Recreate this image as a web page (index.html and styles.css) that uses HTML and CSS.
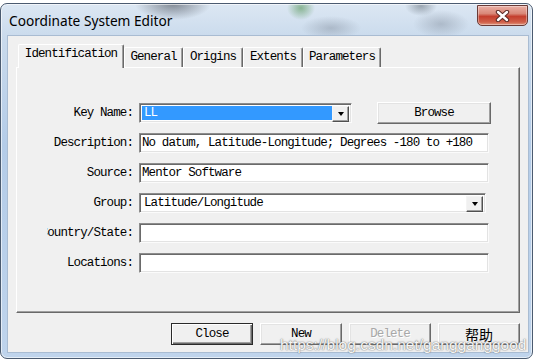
FILE: index.html
```html
<!DOCTYPE html>
<html lang="en">
<head>
    <meta charset="UTF-8">
    <title>Coordinate System Editor</title>
    <link rel="stylesheet" href="styles.css">
</head>
<body>

    <div class="window">
        <!-- Заголовок окна -->
        <div class="titlebar">
            <span class="title">Coordinate System Editor</span>
            <button class="close-btn" aria-label="Close">
                <svg width="15" height="12" viewBox="0 0 15 12">
                    <path d="M3 2 L12 10 M12 2 L3 10" stroke="#5a2a26" stroke-width="4.4" stroke-linecap="round"/>
                    <path d="M3 2 L12 10 M12 2 L3 10" stroke="#ffffff" stroke-width="2.4" stroke-linecap="round"/>
                </svg>
            </button>
        </div>

        <div class="client">
            <div class="tabs">
                <div class="tab active tab-ident">Identification</div>
                <div class="tab tab-general">General</div>
                <div class="tab tab-origins">Origins</div>
                <div class="tab tab-extents">Extents</div>
                <div class="tab tab-params">Parameters</div>
            </div>

            <div class="panel">
                <div class="row row-first">
                    <label class="field-label"><span>Key Name:</span></label>
                    <div class="combo combo-key">
                        <span class="combo-value">LL</span>
                        <span class="drop-btn"><i class="arrow"></i></span>
                    </div>
                    <button class="btn btn-browse">Browse</button>
                </div>
                <div class="row">
                    <label class="field-label"><span>Description:</span></label>
                    <div class="input">No datum, Latitude-Longitude; Degrees -180 to +180</div>
                </div>
                <div class="row">
                    <label class="field-label"><span>Source:</span></label>
                    <div class="input">Mentor Software</div>
                </div>
                <div class="row">
                    <label class="field-label"><span>Group:</span></label>
                    <div class="combo combo-group">
                        <span class="combo-value">Latitude/Longitude</span>
                        <span class="drop-btn"><i class="arrow"></i></span>
                    </div>
                </div>
                <div class="row">
                    <label class="field-label"><span>Country/State:</span></label>
                    <div class="input"></div>
                </div>
                <div class="row">
                    <label class="field-label"><span>Locations:</span></label>
                    <div class="input"></div>
                </div>
            </div>

            <div class="actions">
                <button class="btn btn-default">Close</button>
                <button class="btn">New</button>
                <button class="btn btn-disabled">Delete</button>
                <button class="btn btn-cjk">帮助</button>
            </div>
        </div>

        <div class="watermark">https://blog.csdn.net/gangganggood</div>
    </div>

</body>
</html>
```

FILE: styles.css
```css
body {
    margin: 0;
    width: 539px;
    height: 363px;
    overflow: hidden;
    background-color: #ffffff;
    font-family: "Liberation Mono", "DejaVu Sans Mono", monospace;
    font-size: 12.5px;
    letter-spacing: -0.9px;
    color: #000000;
}

/* Рамка окна (Aero) */
.window {
    position: relative;
    box-sizing: border-box;
    width: 533px;
    height: 356px;
    margin-top: 3px;
    padding: 0 4px 6px 7px;
    border: 1px solid #4b5b70;
    border-radius: 7px;
    background:
        radial-gradient(ellipse 38px 16px at 172px 0px, rgba(55, 60, 70, 0.55), transparent),
        radial-gradient(ellipse 14px 12px at 300px 4px, rgba(70, 140, 70, 0.55), transparent),
        radial-gradient(ellipse 30px 12px at 330px 24px, rgba(90, 100, 115, 0.3), transparent),
        radial-gradient(ellipse 28px 14px at 440px 20px, rgba(90, 100, 115, 0.3), transparent),
        radial-gradient(ellipse 16px 10px at 420px 2px, rgba(60, 70, 80, 0.4), transparent),
        linear-gradient(to bottom, #dce7f3 0%, #c9daec 10%, #b4cce8 40%, #bfd4ec 100%);
    box-shadow: inset 0 0 0 1px rgba(255, 255, 255, 0.6);
}

.titlebar {
    display: flex;
    justify-content: space-between;
    align-items: flex-start;
    height: 32px;
}

.title {
    margin-top: 8px;
    padding-left: 1px;
    font-family: "Noto Sans", "Open Sans", sans-serif;
    font-size: 13.7px;
    line-height: 18px;
    letter-spacing: 0;
    color: #000000;
}

.close-btn {
    display: flex;
    align-items: center;
    justify-content: center;
    box-sizing: border-box;
    width: 51px;
    height: 21px;
    margin-top: 1px;
    padding: 0;
    border: 1px solid #6a3a36;
    border-radius: 0 0 5px 5px;
    background: linear-gradient(to bottom, #eab0a6 0%, #d98878 40%, #c43f2e 55%, #d0604a 85%, #e19a82 100%);
    box-shadow: inset 0 0 0 1px rgba(255, 255, 255, 0.35);
}

/* Клиентская область */
.client {
    box-sizing: border-box;
    height: 316px;
    padding: 8px 8px 0 8px;
    background-color: #f0f0f0;
    box-shadow: 0 0 0 1px #a9bcd2;
}

.tabs {
    position: relative;
    z-index: 1;
    display: flex;
    align-items: flex-end;
    height: 23px;
    padding-left: 2px;
}

.tab {
    box-sizing: border-box;
    height: 20px;
    line-height: 18px;
    text-align: center;
    background-color: #f0f0f0;
    border-top: 1px solid #ffffff;
    border-left: 1px solid #ffffff;
    border-right: 1px solid #696969;
    border-radius: 2px 2px 0 0;
    box-shadow: inset -1px 0 #a0a0a0;
}

.tab.active {
    height: 24px;
    margin-bottom: -1px;
    line-height: 19px;
}

.tab-ident { width: 106px; }
.tab-general { width: 59px; }
.tab-origins { width: 60px; }
.tab-extents { width: 60px; }
.tab-params { width: 78px; }

.panel {
    box-sizing: border-box;
    height: 246px;
    padding: 34px 0 0 30px;
    border: 1px solid;
    border-color: #ffffff #696969 #696969 #ffffff;
    box-shadow: inset -1px -1px #a0a0a0;
    display: flex;
    flex-direction: column;
    gap: 10px;
}

.row {
    display: flex;
    align-items: center;
    height: 20px;
}

.row-first {
    height: 22px;
    margin-bottom: -1px;
}

.field-label {
    display: flex;
    justify-content: flex-end;
    width: 86px;
    margin-right: 6px;
    overflow: hidden;
    white-space: nowrap;
}

.field-label span {
    flex-shrink: 0;
}

/* Утопленные поля ввода */
.input,
.combo {
    box-sizing: border-box;
    height: 20px;
    background-color: #ffffff;
    border: 1px solid;
    border-color: #8c8c8c #fbfbfb #fbfbfb #8c8c8c;
    box-shadow: inset 1px 1px #6a6a6a, inset -1px -1px #e3e3e3;
}

.input {
    width: 350px;
    padding: 0 0 0 2px;
    line-height: 18px;
    white-space: nowrap;
    overflow: hidden;
}

.combo {
    display: flex;
    padding: 2px;
}

.combo-key { width: 213px; }
.combo-group { width: 347px; }

.combo-value {
    flex: 1;
    padding-left: 2px;
    line-height: 15px;
    white-space: nowrap;
}

.combo-key .combo-value {
    background-color: #3399ff;
    color: #ffffff;
}

.drop-btn {
    display: flex;
    align-items: center;
    justify-content: center;
    box-sizing: border-box;
    width: 17px;
    height: 16px;
    background-color: #f0f0f0;
    border: 1px solid;
    border-color: #f4f4f4 #505050 #505050 #f4f4f4;
    box-shadow: inset -1px -1px #a0a0a0;
}

.arrow {
    width: 0;
    height: 0;
    border-left: 3.5px solid transparent;
    border-right: 3.5px solid transparent;
    border-top: 4px solid #000000;
}

/* Кнопки */
.btn {
    box-sizing: border-box;
    width: 82px;
    height: 22px;
    padding: 0;
    font-family: inherit;
    font-size: inherit;
    letter-spacing: inherit;
    color: #000000;
    background-color: #f0f0f0;
    border: 1px solid;
    border-color: #ffffff #696969 #696969 #ffffff;
    box-shadow: inset -1px -1px #a0a0a0, inset 1px 1px #e3e3e3;
}

.btn-browse {
    width: 114px;
    margin-left: 25px;
}

.btn-default {
    border-color: #2a2a2a;
    box-shadow: inset 1px 1px #ffffff, inset -1px -1px #696969, inset -2px -2px #a0a0a0;
}

.btn-disabled {
    color: #a8a8a8;
    text-shadow: 1px 1px #ffffff;
}

.btn-cjk {
    font-family: "Noto Sans CJK SC", sans-serif;
    font-size: 14px;
    letter-spacing: 0;
}

.actions {
    display: flex;
    justify-content: flex-end;
    gap: 7px;
    margin-top: 10px;
}

/* Водяной знак поверх окна */
.watermark {
    position: absolute;
    left: 279px;
    top: 332px;
    font-family: "Liberation Sans", Arial, sans-serif;
    font-size: 15.5px;
    line-height: 18px;
    letter-spacing: 0;
    white-space: nowrap;
    color: rgba(255, 255, 255, 0.95);
    text-shadow: 0 0 1px rgba(90, 90, 90, 0.9), 0 0 2px rgba(120, 120, 120, 0.6);
    pointer-events: none;
}
```
